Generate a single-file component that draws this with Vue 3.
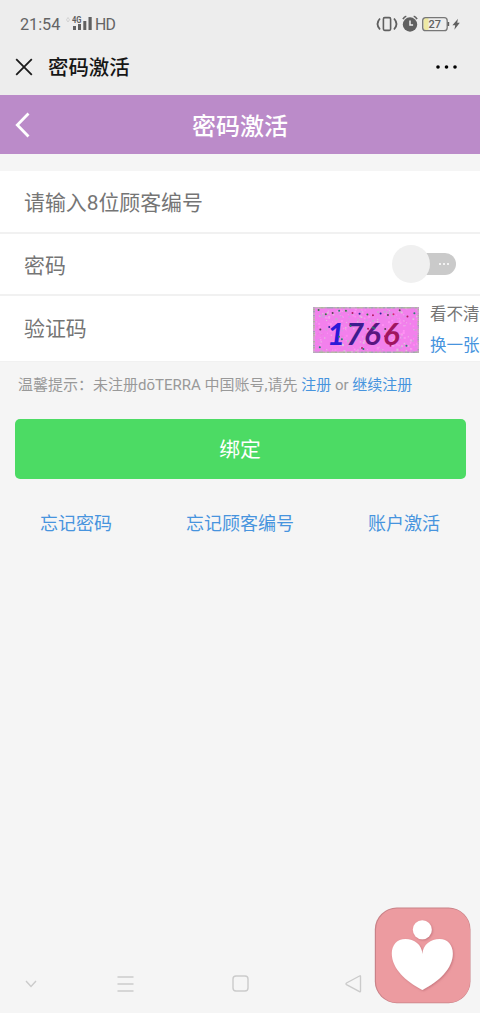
<script setup>
const palette = ['#c9a8d0', '#ff90f4', '#d29ae0', '#efa7e8', '#f07ae6', '#e0bfdc', '#ff88f2']
const edgePalette = ['#a9b8a0', '#c0a0c4', '#b9b9a9', '#c9b0c4', '#a0a8b0']
const strong = ['#28806f', '#b21c63', '#2d269b', '#347a43', '#d62572', '#5b4352']
let seed = 37
function random() {
  seed = (seed * 16807) % 2147483647
  return seed / 2147483647
}
const pick = (colors) => colors[Math.floor(random() * colors.length)]
const grain = Array.from({ length: 330 }, () => ({
  x: random() * 104,
  y: random() * 44,
  s: 0.8 + random() * 1.4,
  c: pick(palette),
}))
const specks = Array.from({ length: 15 }, (_, i) => ({
  x: 5 + i * 6.8 + random() * 2,
  y: 3 + random() * 7,
  c: pick(strong),
})).concat(
  Array.from({ length: 15 }, () => ({
    x: 4 + random() * 96,
    y: 12 + random() * 30,
    c: pick(strong),
  })),
)
const edge = []
for (let x = 0; x < 106; x += 2) {
  edge.push({ x, y: 0, c: pick(edgePalette) }, { x, y: 44.5, c: pick(edgePalette) })
}
for (let y = 0; y < 46; y += 2) {
  edge.push({ x: 0, y, c: pick(edgePalette) }, { x: 104.5, y, c: pick(edgePalette) })
}
</script>

<template>
  <div class="screen">
    <div class="status">
      <span class="time">21:54</span>
      <svg class="signal" width="27" height="18" viewBox="0 0 27 18">
        <path d="m2 2.5 1.5 2.3L2 7 .5 4.8Z" fill="none" stroke="#cfcfcf" stroke-width=".9" />
        <text x="6" y="7.8" font-size="8.5" font-weight="700" textLength="9.5" lengthAdjust="spacingAndGlyphs">4G</text>
        <path d="M7 11h3v4H7zM12 9h3v6h-3zM17.3 6h3v9h-3zM22.5 2h3.2v13h-3.2z" />
      </svg>
      <span class="hd">HD</span>
      <svg class="indicators" width="86" height="20" viewBox="0 0 86 20">
        <rect x="7.4" y="3.6" width="7.2" height="12.8" rx="1.3" fill="none" stroke="#606060" stroke-width="1.6" />
        <path d="M4 4.5q-5 5.5 0 11M18 4.5q5 5.5 0 11" fill="none" stroke="#606060" stroke-width="1.8" />
        <circle cx="34" cy="10.5" r="7.2" />
        <path d="M27 5.1q1.1-2.2 3.3-2.8M37.7 2.3q2.2.6 3.3 2.8" fill="none" stroke="#606060" stroke-width="1.7" />
        <path d="M34 6.5v4.5h3.1" fill="none" stroke="#eee" stroke-width="1.5" />
        <path d="M49.5 4h3v12h-3q-2 0-2-2V6q0-2 2-2" fill="#eee9a4" />
        <rect x="46.7" y="3.7" width="24.5" height="13" rx="3" fill="none" stroke="#777" stroke-width="1.3" />
        <path d="M71.5 8h1.7v4h-1.7z" />
        <text x="58.7" y="14" font-size="11" font-weight="500" text-anchor="middle">27</text>
        <path d="m82 4.8-5.6 6.5h2.8l-.8 4.5 5.4-7h-2.6z" />
      </svg>
    </div>

    <div class="browser-bar">
      <svg class="close" width="18" height="18" viewBox="0 0 18 18"><path d="m1.2 1.2 15.6 15.6m0-15.6L1.2 16.8" fill="none" stroke="#1b1b1b" stroke-width="1.8" /></svg>
      <span class="browser-title">密码激活</span>
      <svg class="more" width="22" height="4" viewBox="0 0 22 4"><circle cx="2" cy="2" r="1.8" /><circle cx="10.5" cy="2" r="1.8" /><circle cx="19" cy="2" r="1.8" /></svg>
    </div>

    <header class="header">
      <svg class="back" width="16" height="26" viewBox="0 0 16 26"><path d="M13.5 1.5 2.3 13l11.2 11.5" fill="none" stroke="#fff" stroke-width="2.8" /></svg>
      <h1>密码激活</h1>
    </header>

    <main>
      <section class="form">
        <div class="row"><span>请输入8位顾客编号</span></div>
        <div class="row password">
          <span>密码</span>
          <div class="switch"><i class="knob"></i><span class="dots"><i></i><i></i><i></i></span></div>
        </div>
        <div class="row verify">
          <span>验证码</span>
          <svg class="captcha" width="106" height="46" viewBox="0 0 106 46">
            <rect width="106" height="46" fill="#f280ec" />
            <rect v-for="(g, i) in grain" :key="'g' + i" :x="g.x" :y="g.y" :width="g.s" :height="g.s" :fill="g.c" />
            <rect v-for="(e, i) in edge" :key="'e' + i" :x="e.x" :y="e.y" width="2" height="1.5" :fill="e.c" />
            <g class="digits">
              <text x="14" y="38" fill="#2c18d8">1</text>
              <text x="33" y="38" fill="#3c1c90">7</text>
              <text x="51" y="38" fill="#591580">6</text>
              <text x="70" y="38" fill="#a01560">6</text>
            </g>
            <circle v-for="(s, i) in specks" :key="'s' + i" :cx="s.x" :cy="s.y" r="1" :fill="s.c" />
          </svg>
          <div class="refresh"><span>看不清</span><a>换一张</a></div>
        </div>
      </section>
      <p class="tip">温馨提示：未注册dōTERRA 中国账号,请先 <a>注册</a> or <a>继续注册</a></p>
      <button>绑定</button>
      <nav class="links"><a>忘记密码</a><a>忘记顾客编号</a><a>账户激活</a></nav>
    </main>

    <footer class="system-nav">
      <svg width="12" height="8" viewBox="0 0 12 8"><path d="m1 1 5 5.5L11 1" /></svg>
      <svg width="17" height="16" viewBox="0 0 17 16"><path d="M.5 1h16M.5 8h16M.5 15h16" /></svg>
      <svg width="17" height="17" viewBox="0 0 17 17"><rect x="1" y="1" width="15" height="15" rx="3" /></svg>
      <svg width="17" height="18" viewBox="0 0 17 18"><path d="M14.5 1 1.5 8q-1 .8 0 1.6l13 7.1q1 .5 1-.7V1.6q0-1.2-1-.6Z" /></svg>
    </footer>

    <svg class="heart-badge" width="97" height="97" viewBox="0 0 97 97">
      <defs>
        <filter id="heart-shadow" x="-20%" y="-20%" width="140%" height="140%"><feDropShadow dx="1" dy="1" stdDeviation="1" flood-color="#b5656e" flood-opacity=".65" /></filter>
      </defs>
      <rect x=".8" y=".5" width="95.7" height="95.7" rx="22" fill="#c98288" />
      <rect x="2" y="1.5" width="94" height="94" rx="21" fill="#ec9ba0" />
      <g fill="#fff" filter="url(#heart-shadow)">
        <circle cx="48.3" cy="22.7" r="9.5" />
        <path d="M48.4 47C48 37.5 40 32 31.5 32c-8.5 0-13.7 6-13.7 14.5C17.8 61.5 32 74.5 48.4 83 65 74.5 78.8 61.5 78.8 46.5 78.8 38 73.5 32 65.5 32 57 32 48.8 37.5 48.4 47Z" />
      </g>
    </svg>
  </div>
</template>

<style>
body { margin: 0; }
</style>

<style scoped>
* { box-sizing: border-box; }
.screen { position: relative; display: flex; flex-direction: column; width: 480px; height: 1013px; overflow: hidden; background: #f5f5f5; font-family: Roboto, "Noto Sans CJK SC", sans-serif; color: #757575; }
svg { display: block; flex: none; }
a { color: #4794de; }
.status { display: flex; align-items: center; flex: none; height: 39px; padding: 9px 18px 0 20px; background: #ededed; color: #646464; }
.status svg { fill: #606060; }
.time { font-size: 16.2px; width: 46px; line-height: 20px; padding-top: 2px; }
.signal { margin-right: 2px; }
.hd { font-size: 15.8px; line-height: 20px; letter-spacing: -.7px; padding-top: 2px; }
.indicators { margin-left: auto; }
.browser-bar { display: flex; align-items: center; flex: none; height: 56px; padding: 0 22px 0 15px; background: #ededed; }
.browser-title { margin-left: 15px; font-size: 20.4px; line-height: 28px; padding-top: 2px; font-weight: 500; color: #161616; }
.more { margin-left: auto; }
.header { display: flex; align-items: center; flex: none; height: 59px; padding: 0 15px; background: #bb8bc9; color: white; }
.header h1 { flex: 1; margin: 0 16px 0 0; padding-top: 4px; text-align: center; font-size: 24px; line-height: 32px; font-weight: 500; }
.form { margin-top: 17px; background: #fff; border-bottom: 1px solid #f1f1f1; }
.row { display: flex; align-items: center; height: 63px; padding: 0 24px; border-bottom: 2px solid #f1f1f1; font-size: 20.9px; line-height: 30px; }
.row > span { padding-top: 2px; }
.password { justify-content: space-between; height: 62px; }
.password > span { padding-top: 3px; }
.switch { position: relative; width: 64px; height: 38px; display: flex; align-items: center; justify-content: flex-end; margin-bottom: 1px; }
.switch::before { content: ""; width: 42px; height: 22px; border-radius: 11px; background: #cacaca; }
.knob { position: absolute; left: 0; top: 0; width: 38px; height: 38px; border-radius: 50%; background: #f0f0f0; }
.dots { position: absolute; right: 7px; top: 18px; display: flex; gap: 2px; }
.dots i { width: 2px; height: 2px; border-radius: 50%; background: #fff; }
.verify { height: 65px; padding-right: 0; border: 0; }
.verify > span { padding-top: 1px; }
.captcha { margin-left: auto; margin-top: 2px; }
.digits { font: italic 700 31px Lato, sans-serif; }
.refresh { display: flex; flex-direction: column; width: 50px; margin: 3px 0 0 11px; flex: none; font-size: 16.5px; line-height: 31px; white-space: nowrap; }
.tip { margin: 11px 0 0 18px; font-size: 15px; line-height: 24px; color: #999; white-space: nowrap; }
button { display: block; width: 451px; height: 60px; margin: 22px 0 0 14.5px; padding: 2px 0 0; border: 0; border-radius: 5px; background: #4cdb64; color: #fff; font-family: inherit; font-size: 20.8px; line-height: 58px; }
.links { display: flex; justify-content: space-between; margin: 31px 40px 0; font-size: 18px; line-height: 28px; }
.system-nav { display: grid; grid-template-columns: 92px 115px 113px 17px; align-items: center; width: 337px; height: 59px; margin: auto 0 0 25px; }
.system-nav svg { fill: none; stroke: #cbcbcb; stroke-width: 1.4; }
.heart-badge { position: absolute; right: 9.5px; bottom: 9.5px; }
</style>
